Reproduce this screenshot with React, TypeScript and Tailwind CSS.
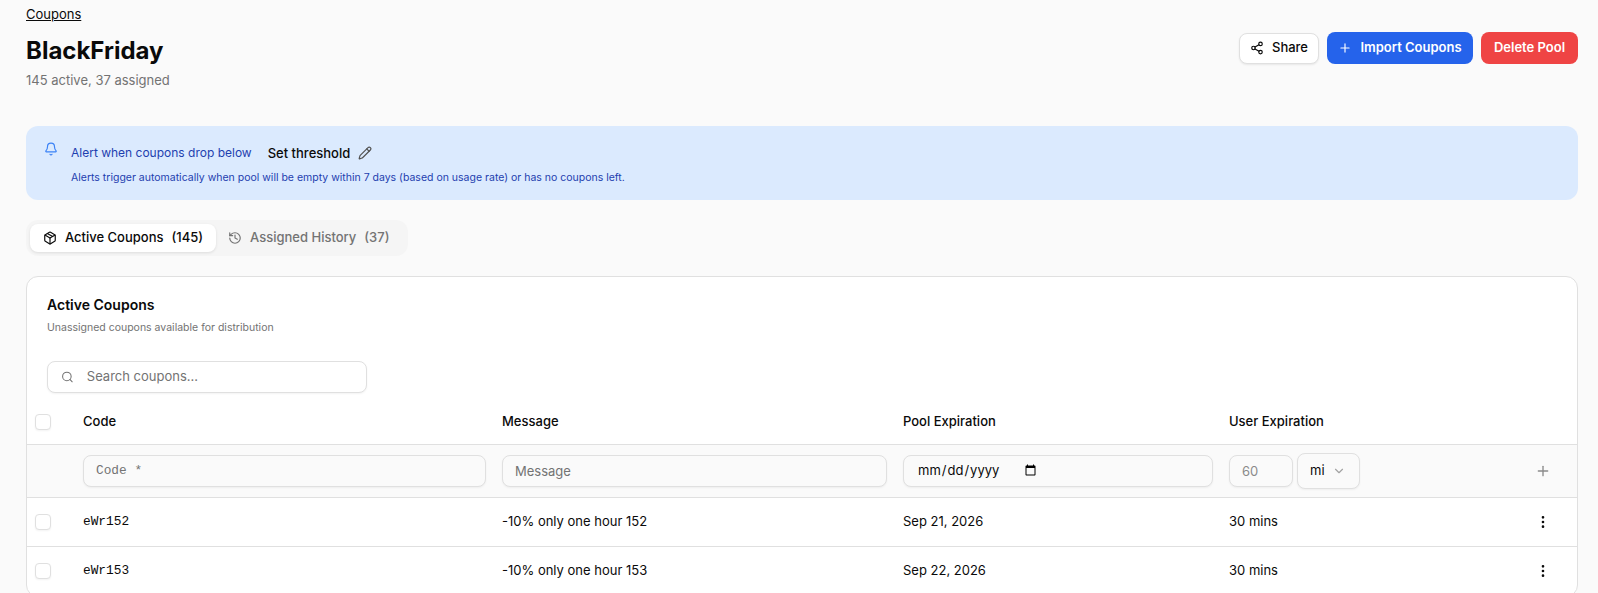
import { Bell, ChevronDown, EllipsisVertical, History, Package, Pencil, Plus, Search, Share2 } from 'lucide-react'

const rows = [
    { code: 'eWr152', message: '-10% only one hour 152', pool: 'Sep 21, 2026', user: '30 mins' },
    { code: 'eWr153', message: '-10% only one hour 153', pool: 'Sep 22, 2026', user: '30 mins' },
]

const inputBase =
    'h-[32px] rounded-lg border border-[#e0e0e0] bg-[#fafafa] shadow-[0_1px_2px_rgba(0,0,0,0.05)] outline-none'

function Checkbox() {
    return <span className="block h-4 w-4 rounded-[4px] border border-[#e0e0e0] bg-white shadow-[0_1px_2px_rgba(0,0,0,0.05)]" />
}

export default function App() {
    return (
        <div className="h-[593px] overflow-hidden bg-[#fafafa] pl-[26px] pr-[20px] font-['Inter',sans-serif] text-[#0a0a0a]">
            {/* Header */}
            <div className="flex items-start justify-between pt-[5px]">
                <div>
                    <a className="block text-[13px] leading-[18px] underline">Coupons</a>
                    <h1 className="mt-[12px] text-2xl leading-8 font-bold">BlackFriday</h1>
                    <p className="mt-[3px] text-[13px] leading-5 text-[#737373]">145 active, 37 assigned</p>
                </div>
                <div className="mt-[27px] flex items-center gap-2">
                    <button className="flex h-[31px] w-[80px] items-center justify-center gap-2 rounded-lg border border-[#e0e0e0] bg-white text-[13px] font-medium shadow-[0_1px_2px_rgba(0,0,0,0.08)]">
                        <Share2 className="h-3.5 w-3.5" />
                        Share
                    </button>
                    <button className="flex h-8 w-[146px] items-center justify-center gap-2 rounded-lg bg-[#2563eb] text-[13px] font-semibold text-white">
                        <Plus className="h-3.5 w-3.5" />
                        Import Coupons
                    </button>
                    <button className="flex h-8 w-[97px] items-center justify-center rounded-lg bg-[#ef4444] text-[13px] font-semibold text-white">
                        Delete Pool
                    </button>
                </div>
            </div>

            {/* Threshold alert */}
            <div className="mt-[36px] flex h-[74px] gap-[13px] rounded-xl bg-[#dbeafe] pl-[18px]">
                <Bell className="mt-[16px] h-3.5 w-3.5 text-[#3b82f6]" />
                <div className="pt-[15px]">
                    <div className="flex items-center text-[12px] leading-6 text-[#1e40af]">
                        Alert when coupons drop below
                        <span className="ml-4 text-[13px] font-medium text-[#0a0a0a]">Set threshold</span>
                        <Pencil className="ml-2 h-3.5 w-3.5 text-[#525252]" />
                    </div>
                    <p className="mt-[5px] text-[10.5px] leading-4 text-[#1e40af]">
                        Alerts trigger automatically when pool will be empty within 7 days (based on usage rate) or has no coupons left.
                    </p>
                </div>
            </div>

            {/* Tabs */}
            <div className="mt-[20px] flex h-9 w-[382px] items-center gap-1 rounded-xl bg-[#f5f5f5] px-1">
                <button className="flex h-7 w-[186px] items-center justify-center gap-2 rounded-lg bg-white text-[13px] font-medium shadow-[0_1px_3px_rgba(0,0,0,0.1)]">
                    <Package className="h-3.5 w-3.5" />
                    <span>Active Coupons</span>
                    <span>(145)</span>
                </button>
                <button className="flex h-7 items-center gap-2 px-2 text-[13px] font-medium text-[#737373]">
                    <History className="h-3.5 w-3.5" />
                    <span>Assigned History</span>
                    <span>(37)</span>
                </button>
            </div>

            {/* Coupon table card */}
            <div className="mt-[20px] rounded-xl border border-[#e0e0e0] bg-white">
                <div className="px-5 pt-[18px]">
                    <h2 className="text-[14px] leading-5 font-semibold">Active Coupons</h2>
                    <p className="mt-[5px] text-[10.5px] leading-4 text-[#737373]">Unassigned coupons available for distribution</p>
                    <div className="mt-[25px] flex h-8 w-[320px] items-center gap-[13px] rounded-lg border border-[#e0e0e0] bg-white pl-[13px] shadow-[0_1px_2px_rgba(0,0,0,0.05)]">
                        <Search className="h-3.5 w-3.5 text-[#737373]" />
                        <input
                            placeholder="Search coupons..."
                            className="w-full bg-transparent text-[13px] outline-none placeholder:text-[#737373]"
                        />
                    </div>
                </div>
                <table className="mt-[7px] w-full table-fixed border-collapse text-left text-[13px]">
                    <colgroup>
                        <col className="w-[48px]" />
                        <col className="w-[419px]" />
                        <col className="w-[401px]" />
                        <col className="w-[326px]" />
                        <col />
                        <col className="w-[70px]" />
                    </colgroup>
                    <thead>
                        <tr className="h-[44px] border-b border-[#e0e0e0]">
                            <th className="pl-2"><Checkbox /></th>
                            <th className="px-2 font-medium">Code</th>
                            <th className="px-2 font-medium">Message</th>
                            <th className="px-2 font-medium">Pool Expiration</th>
                            <th className="px-2 font-medium">User Expiration</th>
                            <th />
                        </tr>
                    </thead>
                    <tbody>
                        <tr className="h-[53px] border-b border-[#e0e0e0] bg-[#fafafa]">
                            <td />
                            <td className="px-2">
                                <input placeholder="Code *" className={`${inputBase} w-full px-3 font-['Liberation_Mono',monospace] text-[12.8px] placeholder:text-[#737373]`} />
                            </td>
                            <td className="px-2">
                                <input placeholder="Message" className={`${inputBase} w-full px-3 text-[13px] placeholder:text-[#737373]`} />
                            </td>
                            <td className="px-2">
                                <div className={`${inputBase} flex w-full items-center pl-[13px]`}>
                                    <input type="date" className="w-[122px] bg-transparent text-[13px] outline-none" />
                                </div>
                            </td>
                            <td className="px-2">
                                <div className="flex items-center gap-1">
                                    <input placeholder="60" className={`${inputBase} w-[64px] px-3 text-[13px] placeholder:text-[#8a8a8a]`} />
                                    <div className={`${inputBase} flex !h-[36px] w-[63px] items-center justify-between pr-[13px] pl-3 text-[13px]`}>
                                        mi
                                        <ChevronDown className="h-3.5 w-3.5 text-[#a3a3a3]" />
                                    </div>
                                </div>
                            </td>
                            <td className="pl-[28px]">
                                <Plus className="h-4 w-4 text-[#8a8a8a]" />
                            </td>
                        </tr>
                        {rows.map((r) => (
                            <tr key={r.code} className="h-[49px] border-b border-[#e0e0e0]">
                                <td className="pl-2"><Checkbox /></td>
                                <td className="px-2 font-['Liberation_Mono',monospace] text-[12.8px]">{r.code}</td>
                                <td className="px-2">{r.message}</td>
                                <td className="px-2">{r.pool}</td>
                                <td className="px-2">{r.user}</td>
                                <td className="pl-[28px]">
                                    <EllipsisVertical className="h-4 w-4" />
                                </td>
                            </tr>
                        ))}
                    </tbody>
                </table>
            </div>
        </div>
    )
}
